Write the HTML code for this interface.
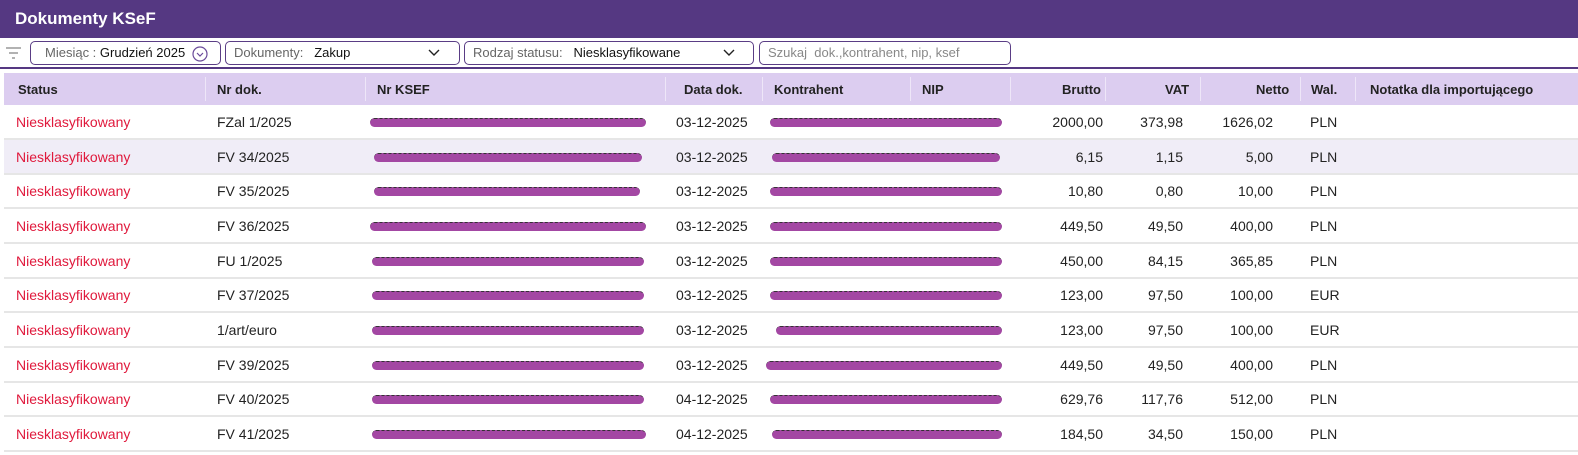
<!DOCTYPE html>
<html><head><meta charset="utf-8"><style>
*{margin:0;padding:0;box-sizing:border-box}
body{width:1578px;height:455px;overflow:hidden;background:#fff;font-family:"Liberation Sans",Arial,sans-serif;font-size:14px;color:#222;position:relative}
.top{position:absolute;left:0;top:0;width:1578px;height:38px;background:#553882;color:#fff;font-weight:bold;font-size:17px;padding:9px 0 0 15px}
.box{position:absolute;top:41px;height:24px;border:1px solid #5a3d85;border-radius:5px;font-size:13px;line-height:22px;color:#111}
.g{color:#666}
.line{position:absolute;left:0;top:67px;width:1578px;height:2px;background:#553882}
.hdr{position:absolute;left:4px;top:73px;width:1574px;height:32px;background:#dccdf0;font-weight:bold;font-size:13px;color:#222}
.hdr span{position:absolute;top:9px}
.sep{position:absolute;top:4px;width:1px;height:24px;background:#eee6f8}
.row{position:absolute;left:4px;width:1574px;height:35px;border-bottom:2px solid #e6e6e6}
.row.s{background:#f0edf7}
.row span{position:absolute;top:9px}
.st{left:12px;color:#e0193c}
.r{text-align:right}
.sc{position:absolute;top:13px;height:9px;background:#a347a3;border-radius:5px;border-top:1px dashed #333}
</style></head><body>
<div class="top">Dokumenty KSeF</div>
<svg style="position:absolute;left:6px;top:46px" width="16" height="14"><path d="M0 2H15M3 7H12M6 12H9" stroke="#999" stroke-width="1.5"/></svg>
<div class="box" style="left:30px;width:191px;padding-left:14px"><span class="g">Miesiąc : </span>Grudzień 2025
<svg style="position:absolute;left:161px;top:4px" width="16" height="16"><circle cx="8" cy="8" r="7" fill="none" stroke="#6a4a9a" stroke-width="1.2"/><path d="M5 7L8 10L11 7" fill="none" stroke="#6a4a9a" stroke-width="1.2"/></svg></div>
<div class="box" style="left:225px;width:235px;padding-left:8px"><span class="g">Dokumenty:</span>&nbsp;&nbsp;&nbsp;Zakup
<svg style="position:absolute;left:202px;top:7px" width="12" height="8"><path d="M1 1L6 6L11 1" fill="none" stroke="#222" stroke-width="1.4"/></svg></div>
<div class="box" style="left:464px;width:290px;padding-left:8px"><span class="g">Rodzaj statusu:</span>&nbsp;&nbsp;&nbsp;Niesklasyfikowane
<svg style="position:absolute;left:258px;top:7px" width="12" height="8"><path d="M1 1L6 6L11 1" fill="none" stroke="#222" stroke-width="1.4"/></svg></div>
<div class="box" style="left:759px;width:252px;padding-left:8px"><span style="color:#888">Szukaj&nbsp; dok.,kontrahent, nip, ksef</span></div>
<div class="line"></div>
<div class="hdr">
<span style="left:14px">Status</span><span style="left:213px">Nr dok.</span><span style="left:373px">Nr KSEF</span><span style="left:680px">Data dok.</span><span style="left:770px">Kontrahent</span><span style="left:918px">NIP</span><span style="left:1058px">Brutto</span><span style="left:1161px">VAT</span><span style="left:1252px">Netto</span><span style="left:1307px">Wal.</span><span style="left:1366px">Notatka dla importującego</span>
<div class="sep" style="left:201px"></div><div class="sep" style="left:361px"></div><div class="sep" style="left:661px"></div><div class="sep" style="left:758px"></div><div class="sep" style="left:906px"></div><div class="sep" style="left:1006px"></div><div class="sep" style="left:1101px"></div><div class="sep" style="left:1196px"></div><div class="sep" style="left:1296px"></div><div class="sep" style="left:1351px"></div>
</div>
<div class="row" style="top:105px"><span class="st">Niesklasyfikowany</span><span style="left:213px">FZal 1/2025</span><div class="sc" style="left:366px;width:276px"></div><span style="left:672px">03-12-2025</span><div class="sc" style="left:766px;width:232px"></div><span class="r" style="right:475px">2000,00</span><span class="r" style="right:395px">373,98</span><span class="r" style="right:305px">1626,02</span><span style="left:1306px">PLN</span></div>
<div class="row s" style="top:140px"><span class="st">Niesklasyfikowany</span><span style="left:213px">FV 34/2025</span><div class="sc" style="left:370px;width:268px"></div><span style="left:672px">03-12-2025</span><div class="sc" style="left:768px;width:228px"></div><span class="r" style="right:475px">6,15</span><span class="r" style="right:395px">1,15</span><span class="r" style="right:305px">5,00</span><span style="left:1306px">PLN</span></div>
<div class="row" style="top:174px"><span class="st">Niesklasyfikowany</span><span style="left:213px">FV 35/2025</span><div class="sc" style="left:370px;width:266px"></div><span style="left:672px">03-12-2025</span><div class="sc" style="left:766px;width:232px"></div><span class="r" style="right:475px">10,80</span><span class="r" style="right:395px">0,80</span><span class="r" style="right:305px">10,00</span><span style="left:1306px">PLN</span></div>
<div class="row" style="top:209px"><span class="st">Niesklasyfikowany</span><span style="left:213px">FV 36/2025</span><div class="sc" style="left:366px;width:276px"></div><span style="left:672px">03-12-2025</span><div class="sc" style="left:766px;width:232px"></div><span class="r" style="right:475px">449,50</span><span class="r" style="right:395px">49,50</span><span class="r" style="right:305px">400,00</span><span style="left:1306px">PLN</span></div>
<div class="row" style="top:244px"><span class="st">Niesklasyfikowany</span><span style="left:213px">FU 1/2025</span><div class="sc" style="left:368px;width:272px"></div><span style="left:672px">03-12-2025</span><div class="sc" style="left:766px;width:232px"></div><span class="r" style="right:475px">450,00</span><span class="r" style="right:395px">84,15</span><span class="r" style="right:305px">365,85</span><span style="left:1306px">PLN</span></div>
<div class="row" style="top:278px"><span class="st">Niesklasyfikowany</span><span style="left:213px">FV 37/2025</span><div class="sc" style="left:368px;width:272px"></div><span style="left:672px">03-12-2025</span><div class="sc" style="left:766px;width:232px"></div><span class="r" style="right:475px">123,00</span><span class="r" style="right:395px">97,50</span><span class="r" style="right:305px">100,00</span><span style="left:1306px">EUR</span></div>
<div class="row" style="top:313px"><span class="st">Niesklasyfikowany</span><span style="left:213px">1/art/euro</span><div class="sc" style="left:368px;width:272px"></div><span style="left:672px">03-12-2025</span><div class="sc" style="left:772px;width:226px"></div><span class="r" style="right:475px">123,00</span><span class="r" style="right:395px">97,50</span><span class="r" style="right:305px">100,00</span><span style="left:1306px">EUR</span></div>
<div class="row" style="top:348px"><span class="st">Niesklasyfikowany</span><span style="left:213px">FV 39/2025</span><div class="sc" style="left:368px;width:272px"></div><span style="left:672px">03-12-2025</span><div class="sc" style="left:762px;width:236px"></div><span class="r" style="right:475px">449,50</span><span class="r" style="right:395px">49,50</span><span class="r" style="right:305px">400,00</span><span style="left:1306px">PLN</span></div>
<div class="row" style="top:382px"><span class="st">Niesklasyfikowany</span><span style="left:213px">FV 40/2025</span><div class="sc" style="left:368px;width:272px"></div><span style="left:672px">04-12-2025</span><div class="sc" style="left:766px;width:232px"></div><span class="r" style="right:475px">629,76</span><span class="r" style="right:395px">117,76</span><span class="r" style="right:305px">512,00</span><span style="left:1306px">PLN</span></div>
<div class="row" style="top:417px"><span class="st">Niesklasyfikowany</span><span style="left:213px">FV 41/2025</span><div class="sc" style="left:368px;width:274px"></div><span style="left:672px">04-12-2025</span><div class="sc" style="left:768px;width:230px"></div><span class="r" style="right:475px">184,50</span><span class="r" style="right:395px">34,50</span><span class="r" style="right:305px">150,00</span><span style="left:1306px">PLN</span></div>
</body></html>
